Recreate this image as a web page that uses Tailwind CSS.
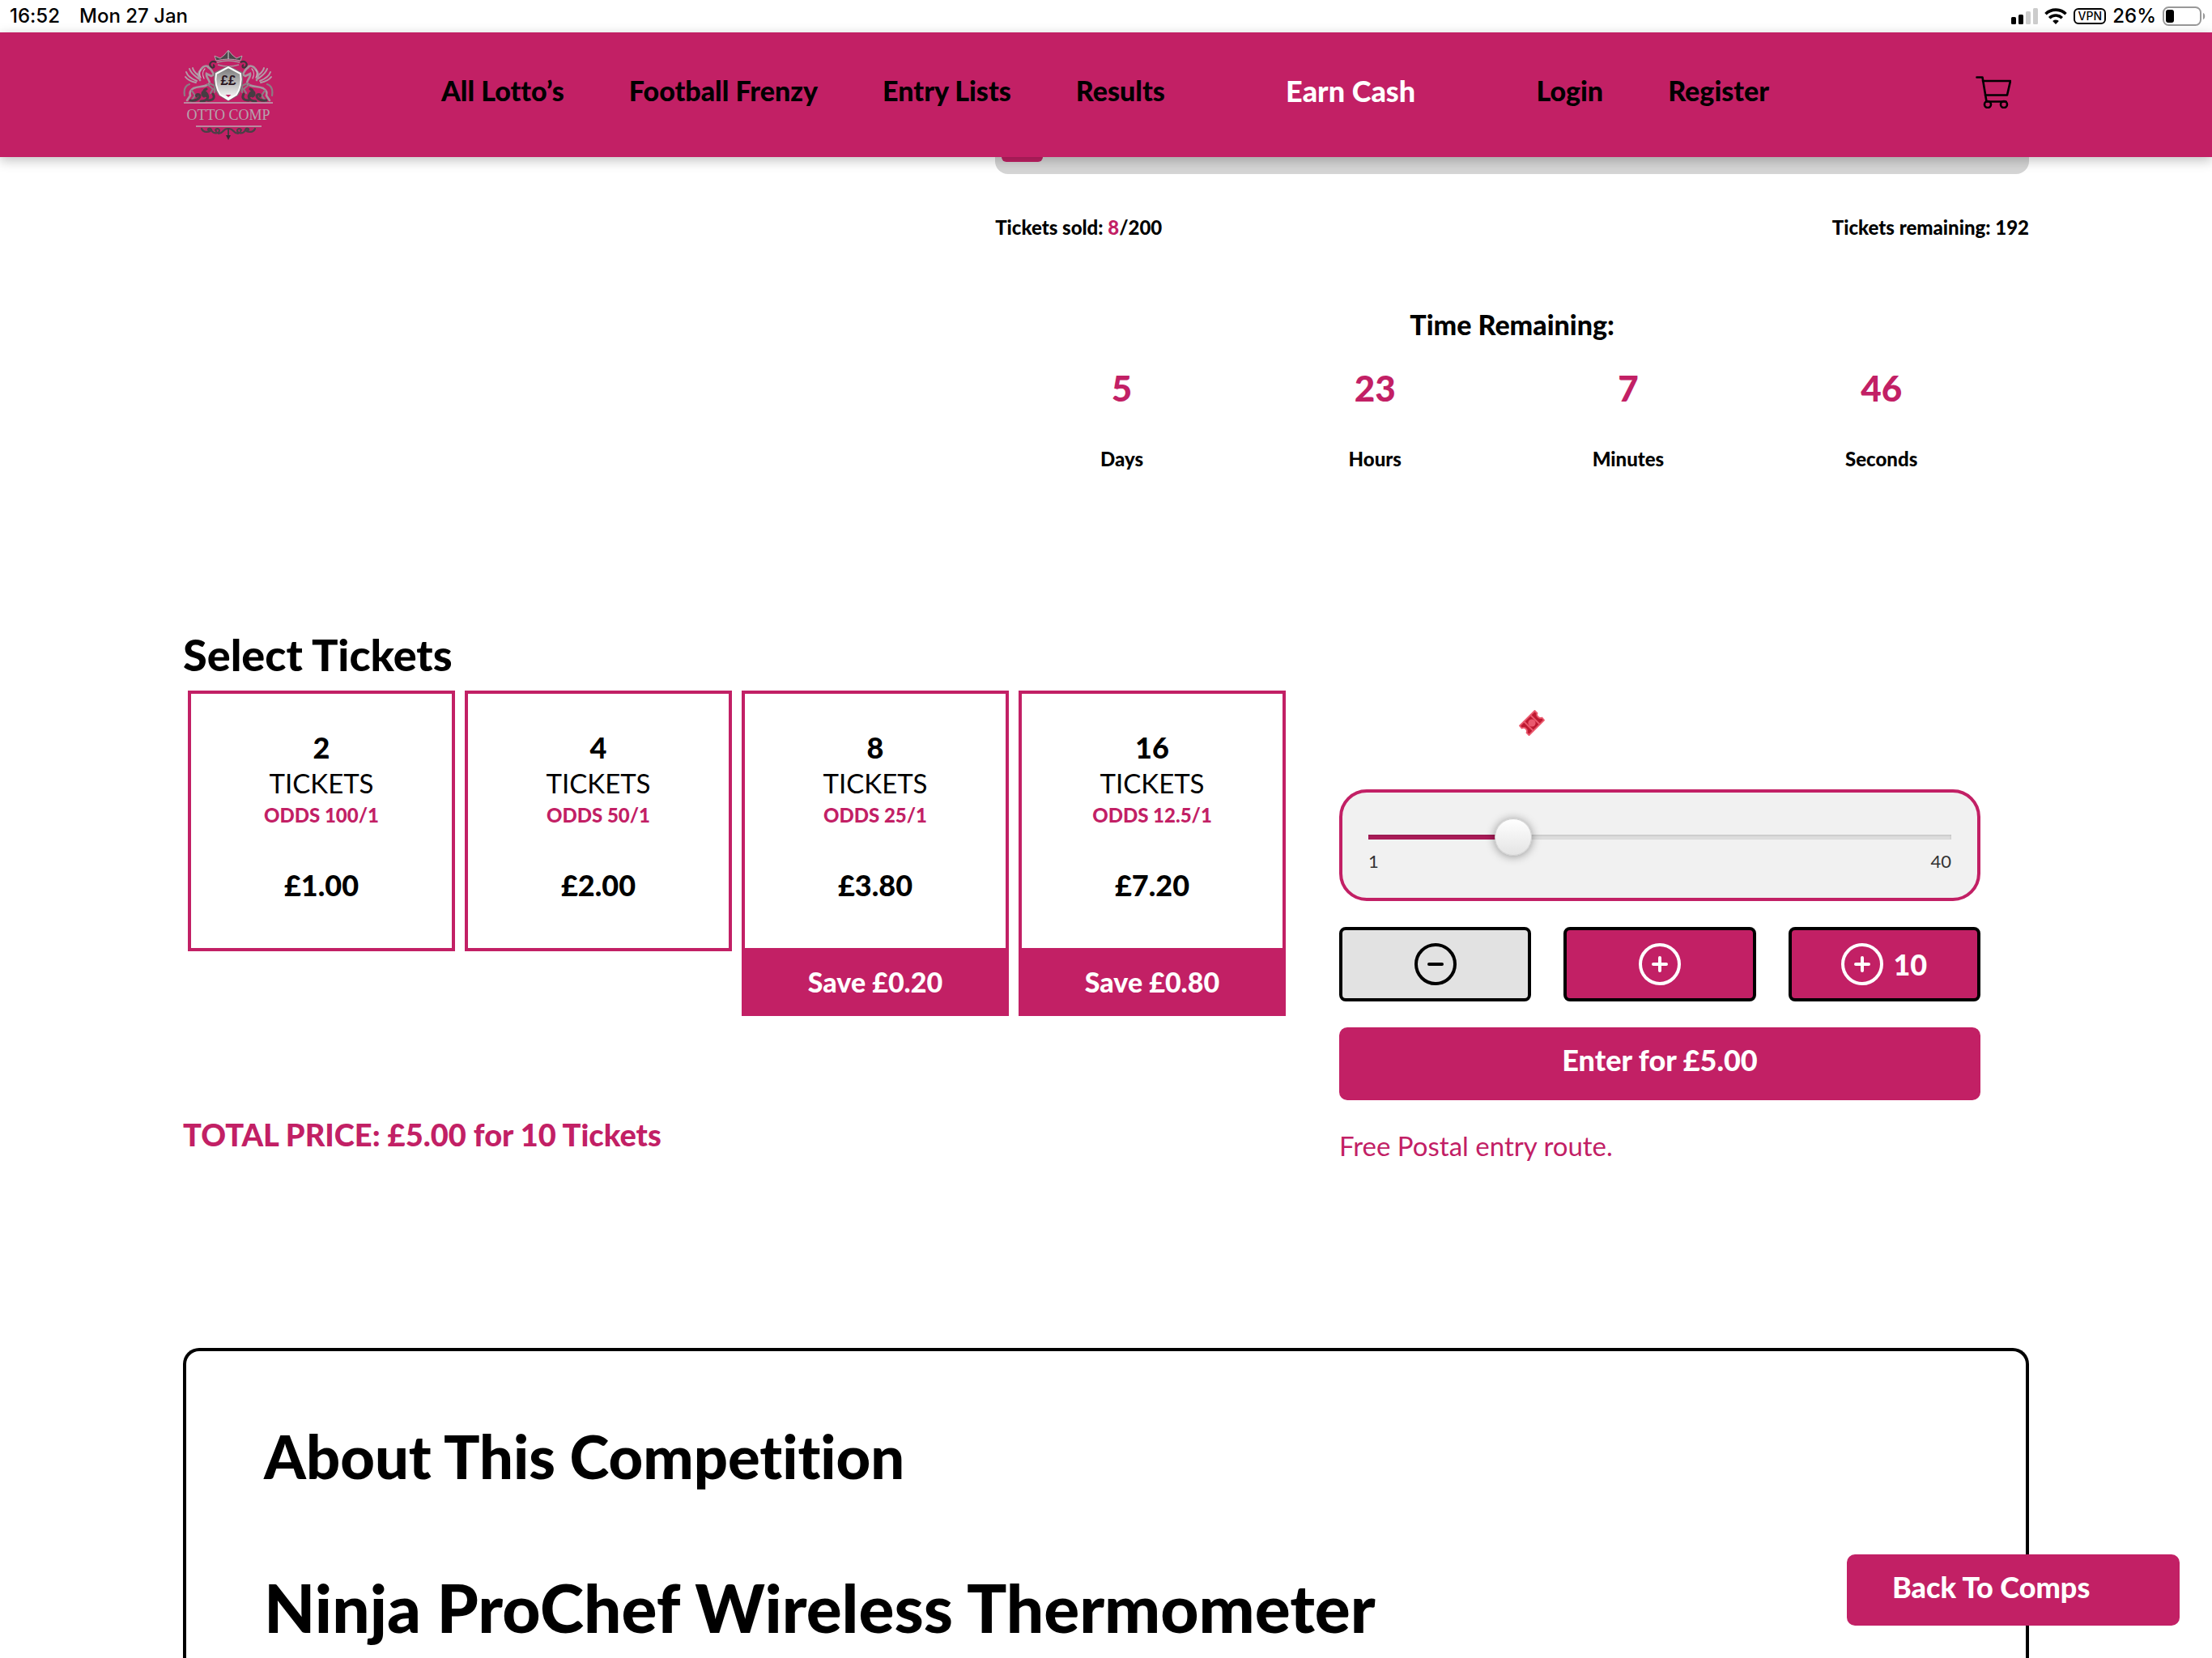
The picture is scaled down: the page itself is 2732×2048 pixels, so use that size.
<!DOCTYPE html>
<html lang="en">
<head>
    <meta charset="UTF-8">
    <meta name="viewport" content="width=device-width, initial-scale=1.0">
    <title>Lotto Comps - Ninja ProChef Wireless Thermometer</title>
    <script src="https://cdn.jsdelivr.net/npm/@tailwindcss/browser@4"></script>
</head>
<body class="h-screen flex flex-col bg-white text-black font-['Lato','Open_Sans',sans-serif] [font-variant-ligatures:none]">

    <!-- Device status bar -->
    <div class="flex h-10 shrink-0 items-center justify-between pl-3 pr-2 text-2xl leading-8 font-medium font-['Inter',sans-serif]">
        <div class="flex gap-6">
            <span>16:52</span>
            <span>Mon 27 Jan</span>
        </div>
        <div class="flex items-center gap-2">
            <svg class="h-5 w-[33px]" viewBox="0 0 33 20" aria-hidden="true">
                <rect x="0" y="11" width="6" height="9" rx="1.5"/>
                <rect x="9" y="8" width="6" height="12" rx="1.5"/>
                <rect x="18" y="4" width="6" height="16" rx="1.5" fill="#ccc"/>
                <rect x="27" y="0" width="6" height="20" rx="1.5" fill="#ccc"/>
            </svg>
            <svg class="h-5 w-7" viewBox="0 0 28 20" fill="none" stroke="#000" stroke-width="3.6" aria-hidden="true">
                <path d="M1.5 7.2a18 18 0 0 1 25 0"/>
                <path d="M6.2 12.2a11.2 11.2 0 0 1 15.6 0"/>
                <path d="M14 20l-3.8-4a5.6 5.6 0 0 1 7.6 0z" fill="#000" stroke="none"/>
            </svg>
            <span class="flex h-5 w-10 items-center justify-center rounded-md border-2 border-black text-sm leading-4">VPN</span>
            <span>26%</span>
            <svg class="h-6 w-[53px]" viewBox="0 0 53 24" aria-hidden="true">
                <rect x="1" y="1" width="46" height="22" rx="6.5" fill="none" stroke="#999" stroke-width="2"/>
                <rect x="4" y="4" width="10" height="16" rx="3"/>
                <path d="M50 8c3 1 3 7 0 8z" fill="#999"/>
            </svg>
        </div>
    </div>

    <!-- Site header -->
    <header class="relative z-10 shrink-0 bg-[#c22065] shadow-[0_4px_14px_rgba(0,0,0,0.25)]">
        <div class="mx-auto flex w-full max-w-[2280px] items-center pt-[22px] pb-5">
            <a href="#" aria-label="Lotto Comps home" class="shrink-0">
                <svg class="size-28" viewBox="0 0 112 112" aria-hidden="true">
                    <defs>
                        <linearGradient id="steel" x1="0" y1="0" x2="0" y2="1">
                            <stop offset="0" stop-color="#777"/>
                            <stop offset="1" stop-color="#fff"/>
                        </linearGradient>
                    </defs>
                    <!-- crown -->
                    <path d="M41 13l-2-6 7 3 5-4 5-6 5 6 5 4 7-3-2 6q-15-4-30 0z" fill="#4a474a" stroke="#b9a3ad" stroke-width="1"/>
                    <path d="M56 1v10" stroke="#ddd" stroke-width="1"/>
                    <path d="M42 15q14-4 28 0M43 18q13 4 26 0" fill="none" stroke="#a8949d" stroke-width="1.5"/>
                    <path d="M41 15c-6-3-10 2-6 6 3 2 5-2 2-3M71 15c6-3 10 2 6 6-3 2-5-2-2-3" fill="none" stroke="#3c3339" stroke-width="2.2"/>
                    <!-- left horse, mirrored for the right -->
                    <g id="horse" fill="none" stroke-linecap="round">
                        <path d="M31 20c-5-2-8 2-11 7-2 5 0 7 1 10M31 21c4 2 5 5 7 9l-3 2-6-3c-1 5 4 7 4 12-5 5-13 3-20 6-5 3-5 6-4 9l-4 6" stroke="#a8959f" stroke-width="2.6"/>
                        <path d="M33 41l6 3 0 8M30 42l7 6-3 5M8 42c-6 2-7 8-6 14M11 50l4 6-5 7" stroke="#8d7b84" stroke-width="2.2"/>
                        <path d="M8 23c2 6 7 9 11 12M4 27c2 6 8 9 13 11M3 33c3 4 8 6 13 7M12 22c1 5 5 7 8 10" stroke="#b39ca8" stroke-width="2"/>
                        <path d="M27 23c-3 3-3 8-1 12M22 24c-3 4-1 8 0 10" stroke="#c9b6c0" stroke-width="1.2"/>
                        <path d="M9 62c7 1 12-2 12-6-2-3-6-1-4 1M22 63c9 0 11-6 6-11-5-3-5 4-2 5M31 62c6 0 9-3 6-8M29 48c-5 1-4 8 1 9" stroke="#463c42" stroke-width="3"/>
                    </g>
                    <use href="#horse" transform="translate(112 0) scale(-1 1)"/>
                    <!-- shield -->
                    <path d="M56 19l17 8c3 10 0 23-5 29l-12 7-12-7c-5-6-8-19-5-29z" fill="#7c6f76"/>
                    <path d="M56 21l15 8c2 10-1 20-5 26l-10 6-10-6c-4-6-7-16-5-26z" fill="url(#steel)" stroke="#fff" stroke-width="2"/>
                    <path d="M52.5 55h7l-3.5 3z" fill="#c22065"/>
                    <text x="56" y="43" text-anchor="middle" font-family="Liberation Sans" font-size="17" font-weight="700" fill="#2a1520">££</text>
                    <path d="M1 65h110M16 94h81" stroke="#b9aab2" stroke-width="1.7"/>
                    <text x="56" y="86" text-anchor="middle" font-family="Liberation Serif" font-size="18" fill="#b5a4ad">OTTO COMP</text>
                    <!-- base flourish -->
                    <g id="leaf" fill="none" stroke="#4b3f46" stroke-width="2.2" stroke-linecap="round">
                        <path d="M23 97c2 5 10 5 12 1-2-3-6 0-3 1M35 99c3 5 10 4 10 0-1-4-7-1-4 1M44 103c6 0 5-6 11-6"/>
                    </g>
                    <use href="#leaf" transform="translate(112 0) scale(-1 1)"/>
                    <path d="M56 96v10" stroke="#463c42" stroke-width="2"/>
                    <path d="M53 105h6l-3 6z" fill="#332b30"/>
                </svg>
            </a>
            <nav class="ml-[207px] mr-[255px] flex flex-1 items-center justify-between pb-3 text-[34px] leading-10 font-black">
                <div class="flex gap-20">
                    <a href="#">All Lotto’s</a>
                    <a href="#">Football Frenzy</a>
                    <a href="#">Entry Lists</a>
                    <a href="#">Results</a>
                </div>
                <a href="#" class="text-4xl leading-10 text-white">Earn Cash</a>
                <div class="flex gap-20">
                    <a href="#">Login</a>
                    <a href="#">Register</a>
                </div>
            </nav>
            <a href="#" aria-label="Basket" class="mr-[22px] shrink-0 pb-2">
                <svg class="h-10 w-11" viewBox="0 0 44 40" fill="none" stroke="#000" stroke-width="2.6" stroke-linecap="round" stroke-linejoin="round" aria-hidden="true">
                    <path d="M1.5 1.5h7l5 30h24"/>
                    <path d="M9 6h34l-4 17.5H12"/>
                    <circle cx="15" cy="35" r="4"/>
                    <circle cx="35" cy="35" r="4"/>
                </svg>
            </a>
        </div>
    </header>

    <main class="flex-1 overflow-y-auto [scrollbar-width:none]">
        <div class="mx-auto w-full max-w-[2280px]">

            <!-- Draw progress and countdown -->
            <section class="ml-[44%]">
                <div role="progressbar" aria-label="Tickets sold" aria-valuenow="8" aria-valuemax="200" class="h-[21px] rounded-b-2xl bg-[#d5d5d5] px-2">
                    <div class="h-1.5 rounded-b-lg bg-[#c22065]" style="width: 4%"></div>
                </div>
                <div class="mt-[50px] flex justify-between text-2xl leading-8 font-black">
                    <p>Tickets sold: <span class="text-[#c22065]">8</span>/200</p>
                    <p>Tickets remaining: 192</p>
                </div>
                <h2 class="mt-[84px] text-center text-[34px] leading-10 font-black">Time Remaining:</h2>
                <div class="mt-[30px] mr-[26px] grid grid-cols-4 text-center font-black">
                    <div>
                        <p class="text-[44px] leading-14 text-[#c22065]">5</p>
                        <p class="mt-11 text-2xl leading-8">Days</p>
                    </div>
                    <div>
                        <p class="text-[44px] leading-14 text-[#c22065]">23</p>
                        <p class="mt-11 text-2xl leading-8">Hours</p>
                    </div>
                    <div>
                        <p class="text-[44px] leading-14 text-[#c22065]">7</p>
                        <p class="mt-11 text-2xl leading-8">Minutes</p>
                    </div>
                    <div>
                        <p class="text-[44px] leading-14 text-[#c22065]">46</p>
                        <p class="mt-11 text-2xl leading-8">Seconds</p>
                    </div>
                </div>
            </section>

            <!-- Ticket picker -->
            <section class="mt-[194px] flex">
                <div class="w-3/5">
                    <h2 class="text-[54px] leading-16 font-black">Select Tickets</h2>
                    <div class="mt-3 grid grid-cols-4 items-start gap-3 px-1.5">
                        <button type="button" class="flex flex-col text-center">
                            <span class="flex w-full flex-col border-4 border-[#c22065] pt-[42px] pb-[54px]">
                                <span class="text-4xl leading-12 font-black">2</span>
                                <span class="text-[33px] leading-10">TICKETS</span>
                                <span class="mt-0.5 text-2xl leading-9 font-black text-[#c22065]">ODDS 100/1</span>
                                <span class="mt-11 text-4xl leading-12 font-black">£1.00</span>
                            </span>
                        </button>
                        <button type="button" class="flex flex-col text-center">
                            <span class="flex w-full flex-col border-4 border-[#c22065] pt-[42px] pb-[54px]">
                                <span class="text-4xl leading-12 font-black">4</span>
                                <span class="text-[33px] leading-10">TICKETS</span>
                                <span class="mt-0.5 text-2xl leading-9 font-black text-[#c22065]">ODDS 50/1</span>
                                <span class="mt-11 text-4xl leading-12 font-black">£2.00</span>
                            </span>
                        </button>
                        <button type="button" class="flex flex-col text-center">
                            <span class="flex w-full flex-col border-4 border-[#c22065] pt-[42px] pb-[54px]">
                                <span class="text-4xl leading-12 font-black">8</span>
                                <span class="text-[33px] leading-10">TICKETS</span>
                                <span class="mt-0.5 text-2xl leading-9 font-black text-[#c22065]">ODDS 25/1</span>
                                <span class="mt-11 text-4xl leading-12 font-black">£3.80</span>
                            </span>
                            <span class="w-full bg-[#c22065] pt-[18px] pb-[22px] text-[34px] leading-10 font-black text-white">Save £0.20</span>
                        </button>
                        <button type="button" class="flex flex-col text-center">
                            <span class="flex w-full flex-col border-4 border-[#c22065] pt-[42px] pb-[54px]">
                                <span class="text-4xl leading-12 font-black">16</span>
                                <span class="text-[33px] leading-10">TICKETS</span>
                                <span class="mt-0.5 text-2xl leading-9 font-black text-[#c22065]">ODDS 12.5/1</span>
                                <span class="mt-11 text-4xl leading-12 font-black">£7.20</span>
                            </span>
                            <span class="w-full bg-[#c22065] pt-[18px] pb-[22px] text-[34px] leading-10 font-black text-white">Save £0.80</span>
                        </button>
                    </div>
                    <p class="mt-[124px] text-[38px] leading-11 font-black text-[#c22065]">TOTAL PRICE: £5.00 for 10 Tickets</p>
                </div>

                <div class="w-2/5 px-[60px] pt-[100px]">
                    <svg class="ml-[28%] size-8" viewBox="0 0 32 32" aria-hidden="true">
                        <path d="M19.5 1l3 3c-1 2 0 3.5 1 4.5s3 2 5 1L31 12.5 12.5 31l-3-3c1-2 0-4-1-5s-3-1.500-5-.5L1 19.500z" fill="#be1931" stroke="#ea596e" stroke-width="1.8" stroke-linejoin="round"/>
                        <path d="M14.5 6.5l11 11M6.5 14.5l11 11" stroke="#ea596e" stroke-width="1.8"/>
                        <circle cx="16" cy="16" r="4.6" fill="#ea596e"/>
                    </svg>
                    <div class="mt-[66px] rounded-[34px] border-4 border-[#c22065] bg-[#f1f1f1] px-8 py-[35px]">
                        <input type="range" id="ticketCount" aria-label="Number of tickets" min="1" max="40" value="10"
                               class="block h-10 w-full appearance-none bg-transparent [&::-webkit-slider-runnable-track]:h-1.5 [&::-webkit-slider-runnable-track]:bg-[linear-gradient(to_right,#ab1c59_24%,#dedede_24%)] [&::-webkit-slider-runnable-track]:shadow-[inset_0_1px_3px_rgba(0,0,0,0.15)] [&::-webkit-slider-thumb]:-mt-5 [&::-webkit-slider-thumb]:size-[46px] [&::-webkit-slider-thumb]:appearance-none [&::-webkit-slider-thumb]:rounded-full [&::-webkit-slider-thumb]:border [&::-webkit-slider-thumb]:border-[#d0d0d0] [&::-webkit-slider-thumb]:bg-[linear-gradient(#fff,#e4e4e4)] [&::-webkit-slider-thumb]:shadow-[0_1px_12px_rgba(0,0,0,0.4)]">
                        <div class="flex justify-between text-[22px] leading-5 text-[#333]">
                            <span>1</span>
                            <span>40</span>
                        </div>
                    </div>
                    <div class="mt-8 grid grid-cols-3 gap-10">
                        <button type="button" aria-label="Remove one ticket" class="flex h-[92px] items-center justify-center rounded-lg border-4 border-black bg-[#e2e2e2]">
                            <svg class="size-[52px]" viewBox="0 0 52 52" fill="none" stroke="currentColor" stroke-width="4" stroke-linecap="round" aria-hidden="true">
                                <circle cx="26" cy="26" r="24"/>
                                <path d="M18 26h16"/>
                            </svg>
                        </button>
                        <button type="button" aria-label="Add one ticket" class="flex h-[92px] items-center justify-center rounded-lg border-4 border-black bg-[#c22065] text-white">
                            <svg class="size-[52px]" viewBox="0 0 52 52" fill="none" stroke="currentColor" stroke-width="4" stroke-linecap="round" aria-hidden="true">
                                <circle cx="26" cy="26" r="24"/>
                                <path d="M18 26h16M26 18v16"/>
                            </svg>
                        </button>
                        <button type="button" aria-label="Add 10 tickets" class="flex h-[92px] items-center justify-center gap-3 rounded-lg border-4 border-black bg-[#c22065] text-4xl leading-12 font-black text-white">
                            <svg class="size-[52px]" viewBox="0 0 52 52" fill="none" stroke="currentColor" stroke-width="4" stroke-linecap="round" aria-hidden="true">
                                <circle cx="26" cy="26" r="24"/>
                                <path d="M18 26h16M26 18v16"/>
                            </svg>
                            10
                        </button>
                    </div>
                    <button type="button" class="mt-8 w-full rounded-[10px] bg-[#c22065] pt-5 pb-[30px] text-4xl leading-10 font-black text-white">Enter for £5.00</button>
                    <a href="#" class="mt-9 block text-[33px] leading-10 text-[#c22065]">Free Postal entry route.</a>
                </div>
            </section>

            <!-- Competition details -->
            <section class="mt-[230px] rounded-t-[20px] border-4 border-b-0 border-black px-24 pt-[90px] pb-24">
                <h2 class="text-[74px] leading-20 font-black">About This Competition</h2>
                <h1 class="mt-[98px] text-[82px] leading-24 font-black">Ninja ProChef Wireless Thermometer</h1>
            </section>
        </div>
    </main>

    <a href="#" class="fixed right-10 bottom-10 z-20 min-w-[411px] rounded-[10px] bg-[#c22065] pt-5 pb-7 pl-14 text-4xl leading-10 font-black text-white">Back To Comps</a>
</body>
</html>
